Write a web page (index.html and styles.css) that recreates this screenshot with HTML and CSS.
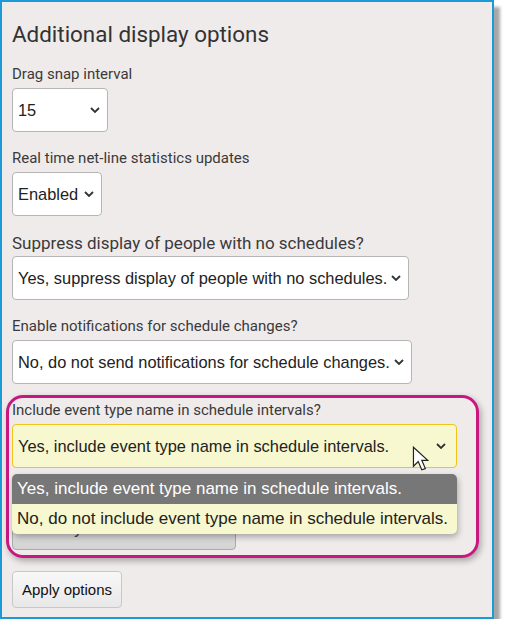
FILE: index.html
```html
<!DOCTYPE html>
<html lang="en">
<head>
  <meta charset="UTF-8">
  <title>Additional display options</title>
  <link rel="stylesheet" href="styles.css">
</head>
<body>
  <div class="panel">
    <h2>Additional display options</h2>

    <div class="field">
      <label>Drag snap interval</label>
      <div class="select-wrap w-snap">
        <select><option>15</option></select>
        <svg class="chev" viewBox="0 0 10 6"><path d="M1 1l4 4 4-4"/></svg>
      </div>
    </div>

    <div class="field">
      <label>Real time net-line statistics updates</label>
      <div class="select-wrap w-stats">
        <select><option>Enabled</option></select>
        <svg class="chev" viewBox="0 0 10 6"><path d="M1 1l4 4 4-4"/></svg>
      </div>
    </div>

    <div class="field">
      <label class="big">Suppress display of people with no schedules?</label>
      <div class="select-wrap w-suppress">
        <select><option>Yes, suppress display of people with no schedules.</option></select>
        <svg class="chev" viewBox="0 0 10 6"><path d="M1 1l4 4 4-4"/></svg>
      </div>
    </div>

    <div class="field">
      <label>Enable notifications for schedule changes?</label>
      <div class="select-wrap w-notify">
        <select><option>No, do not send notifications for schedule changes.</option></select>
        <svg class="chev" viewBox="0 0 10 6"><path d="M1 1l4 4 4-4"/></svg>
      </div>
    </div>

    <!-- highlighted group with the open dropdown -->
    <div class="field highlight-group">
      <div class="callout"></div>
      <label>Include event type name in schedule intervals?</label>
      <div class="select-wrap w-event focused">
        <select><option>Yes, include event type name in schedule intervals.</option></select>
        <svg class="chev" viewBox="0 0 10 6"><path d="M1 1l4 4 4-4"/></svg>
        <svg class="cursor" viewBox="0 0 13 21"><path d="M1 1v16l4-4 3 7 3-1-3-7h5z"/></svg>
        <div class="dropdown-list">
          <div class="opt selected">Yes, include event type name in schedule intervals.</div>
          <div class="opt">No, do not include event type name in schedule intervals.</div>
        </div>
      </div>
      <button class="btn tz-btn">Use my default time zone</button>
    </div>

    <button class="btn apply-btn">Apply options</button>
  </div>
</body>
</html>
```

FILE: styles.css
```css
body {
  margin: 0;
  background: #fff;
  font-family: Roboto, "Liberation Sans", sans-serif;
}

/* Outer framed panel */
.panel {
  width: 480px;
  height: 595px;
  padding: 10px 0 10px 10px;
  border: 2px solid #1b9ad8;
  background: #f0ebeb;
  box-shadow: 6px 7px 3px rgba(0, 0, 0, 0.35);
  position: relative;
}

.panel h2 {
  margin: 9px 0 0 0;
  font-size: 22.4px;
  line-height: 26px;
  font-weight: 400;
  color: #333;
}

.field {
  margin-top: 18px;
}

.field + .field {
  margin-top: 17px;
}

.field label {
  display: block;
  font-size: 15px;
  line-height: 18px;
  color: #3a3a3a;
  margin-bottom: 5px;
}

.field label.big {
  font-size: 17px;
  line-height: 20px;
  margin-bottom: 3px;
}

/* Select with custom chevron */
.select-wrap {
  position: relative;
  height: 44px;
}

.select-wrap select {
  appearance: none;
  -webkit-appearance: none;
  width: 100%;
  height: 100%;
  border: 1px solid #b5b5b5;
  border-radius: 4px;
  background: #fff;
  font-family: "Liberation Sans", Arial, sans-serif;
  font-size: 16.4px;
  color: #222;
  padding: 0 20px 0 5px;
}

.select-wrap .chev {
  position: absolute;
  right: 8px;
  top: 19px;
  width: 10px;
  height: 6px;
  fill: none;
  stroke: #333;
  stroke-width: 1.8;
}

.w-snap { width: 96px; }
.w-stats { width: 90px; }
.w-suppress { width: 397px; }
.w-notify { width: 400px; }
.w-event { width: 445px; }

.select-wrap.focused select {
  background: #f7f7d0;
  border-color: #f0c419;
}

.select-wrap.focused .chev {
  right: 11px;
}

.cursor {
  position: absolute;
  left: 399px;
  top: 22px;
  width: 18px;
  height: 25px;
  fill: #fff;
  stroke: #222;
  stroke-width: 1;
  z-index: 3;
}

/* Open dropdown */
.dropdown-list {
  position: absolute;
  left: 0;
  top: 50px;
  width: 445px;
  background: #f7f7d0;
  border-radius: 5px;
  box-shadow: 1px 3px 6px rgba(0, 0, 0, 0.3);
  overflow: hidden;
  z-index: 2;
  font-family: "Liberation Sans", Arial, sans-serif;
  font-size: 17px;
  color: #222;
}

.dropdown-list .opt {
  height: 30px;
  line-height: 30px;
  padding-left: 5px;
  white-space: nowrap;
}

.dropdown-list .opt.selected {
  background: #777;
  color: #fff;
}

/* Highlight callout around group */
.highlight-group {
  position: relative;
}

.callout {
  position: absolute;
  left: -6px;
  top: -6px;
  width: 467px;
  height: 157px;
  border: 3px solid #c8177f;
  border-radius: 17px;
  box-shadow: 2px 3px 6px rgba(0, 0, 0, 0.3);
  pointer-events: none;
}

/* Buttons */
.btn {
  display: block;
  font-family: "Liberation Sans", Arial, sans-serif;
  font-size: 15px;
  color: #111;
  border: 1px solid #c8c8c8;
  border-radius: 4px;
  background: linear-gradient(#f8f8f8, #e8e8e8);
}

.tz-btn {
  width: 224px;
  height: 48px;
  margin-top: 34px;
  background: linear-gradient(#e8e8e8, #d4d4d4);
  border-color: #aaa;
  font-size: 17px;
  text-align: left;
  padding: 6px 0 0 12px;
  color: #444;
}

.apply-btn {
  margin-top: 21px;
  width: 110px;
  height: 37px;
}
```
